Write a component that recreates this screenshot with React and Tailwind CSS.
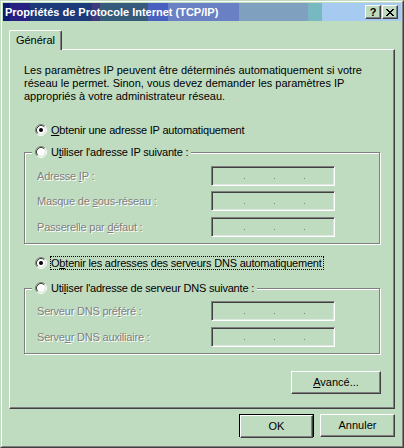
import React from "react";

function Radio({ checked }) {
  return (
    <svg width="12" height="12" viewBox="0 0 12 12" className="shrink-0">
      <circle cx="6" cy="6" r="4" fill="#ffffff" />
      <path d="M2.11 9.89A5.5 5.5 0 0 1 9.89 2.11" stroke="#808080" fill="none" />
      <path d="M9.89 2.11A5.5 5.5 0 0 1 2.11 9.89" stroke="#ffffff" fill="none" />
      <path d="M2.82 9.18A4.5 4.5 0 0 1 9.18 2.82" stroke="#404040" fill="none" />
      <path d="M9.18 2.82A4.5 4.5 0 0 1 2.82 9.18" stroke="#dfe8df" fill="none" />
      {checked && <circle cx="6" cy="6" r="2" fill="#000000" />}
    </svg>
  );
}

function IpBox() {
  return (
    <div className="h-[20px] w-[124px] border border-t-[#808080] border-l-[#808080] border-b-white border-r-white shadow-[inset_1px_1px_0_#404040,inset_-1px_-1px_0_#dfe8df]">
      <div className="flex gap-[29px] pl-[32px] pt-[11px]">
        <span className="h-px w-px bg-[#808080]" />
        <span className="h-px w-px bg-[#808080]" />
        <span className="h-px w-px bg-[#808080]" />
      </div>
    </div>
  );
}

function Field({ children, className = "" }) {
  return (
    <div className={`flex items-center pl-[12px] ${className}`}>
      <span className="w-[174px] tracking-[-0.2px] text-[#808080] [text-shadow:1px_1px_0_#ffffff]">{children}</span>
      <IpBox />
    </div>
  );
}

function Button({ children, className = "" }) {
  return (
    <div
      className={`flex h-[23px] items-center justify-center border border-t-white border-l-white border-r-[#404040] border-b-[#404040] shadow-[inset_-1px_-1px_0_#808080] ${className}`}
    >
      {children}
    </div>
  );
}

function CaptionButton({ children }) {
  return (
    <div className="flex h-[14px] w-[16px] items-center justify-center border border-t-white border-l-white border-r-[#404040] border-b-[#404040] bg-[#c0dcc0] shadow-[inset_-1px_-1px_0_#808080]">
      {children}
    </div>
  );
}

function CloseGlyph() {
  const px = [
    [0, 0], [1, 0], [6, 0], [7, 0],
    [1, 1], [2, 1], [5, 1], [6, 1],
    [2, 2], [3, 2], [4, 2], [5, 2],
    [3, 3], [4, 3],
    [2, 4], [3, 4], [4, 4], [5, 4],
    [1, 5], [2, 5], [5, 5], [6, 5],
    [0, 6], [1, 6], [6, 6], [7, 6],
  ];
  return (
    <svg width="8" height="7" viewBox="0 0 8 7" shapeRendering="crispEdges">
      {px.map(([x, y]) => (
        <rect key={`${x}-${y}`} x={x} y={y} width="1" height="1" fill="#000" />
      ))}
    </svg>
  );
}

export default function App() {
  return (
    <div className="h-[448px] w-[404px] overflow-hidden border border-t-[#c0dcc0] border-l-[#c0dcc0] border-r-[#404040] border-b-[#404040] bg-[#c0dcc0] font-['Liberation_Sans',Arial,sans-serif] text-[11px] leading-[13px] text-black">
      <div className="flex h-full flex-col border border-t-white border-l-white border-r-[#808080] border-b-[#808080] p-px">
        {/* title bar */}
        <div className="flex h-[18px] shrink-0 items-center justify-between bg-[linear-gradient(to_right,#0c1a72_0px,#0c1a72_7px,#281f82_7px,#281f82_27px,#1c3a7a_27px,#1c3a7a_89px,#40387e_89px,#40387e_97px,#365a7a_97px,#365a7a_145px,#4860c0_145px,#4860c0_165px,#6a80c4_165px,#6a80c4_236px,#80a0c0_236px,#80a0c0_305px,#78b8c0_305px,#78b8c0_319px,#a6caf0_319px)] pl-[2px] pr-[3px]">
          <span className="text-[11px] font-bold text-white">Propriétés de Protocole Internet (TCP/IP)</span>
          <div className="flex gap-px">
            <CaptionButton>
              <span className="text-[11px] font-bold leading-none">?</span>
            </CaptionButton>
            <CaptionButton>
              <CloseGlyph />
            </CaptionButton>
          </div>
        </div>

        <div className="mt-[9px] flex flex-col px-[6px]">
          {/* tab */}
          <div className="relative z-10 -mb-px flex h-[20px] w-[53px] items-center justify-center rounded-t-[2px] border-l border-t border-r border-l-white border-t-white border-r-[#404040] bg-[#c0dcc0] pb-[1px] shadow-[inset_-1px_0_0_#808080]">
            Général
          </div>

          {/* panel */}
          <div className="flex h-[360px] flex-col border border-t-white border-l-white border-r-[#404040] border-b-[#404040] shadow-[inset_-1px_-1px_0_#808080]">
            <p className="ml-[14px] mt-[14px]">
              Les paramètres IP peuvent être déterminés automatiquement si votre
              <br />
              réseau le permet. Sinon, vous devez demander les paramètres IP
              <br />
              appropriés à votre administrateur réseau.
            </p>

            <div className="ml-[25px] mt-[19px] flex h-[16px] items-center gap-[4px]">
              <Radio checked />
              <span className="tracking-[-0.2px]">
                <u>O</u>btenir une adresse IP automatiquement
              </span>
            </div>

            <div className="relative ml-[14px] mt-[14px] h-[92px] w-[356px] border border-[#808080] shadow-[inset_1px_1px_0_#ffffff,1px_1px_0_#ffffff]">
              <div className="absolute -top-[9px] left-[7px] flex h-[16px] items-center gap-[4px] bg-[#c0dcc0] px-[3px]">
                <Radio />
                <span className="tracking-[-0.2px]">
                  U<u>t</u>iliser l'adresse IP suivante :
                </span>
              </div>
              <Field className="mt-[13px]">
                Adresse <u>I</u>P :
              </Field>
              <Field className="mt-[5px]">
                Masque de <u>s</u>ous-réseau :
              </Field>
              <Field className="mt-[6px]">
                Passerelle par <u>d</u>éfaut :
              </Field>
            </div>

            <div className="ml-[25px] mt-[11px] flex h-[16px] items-center gap-[3px]">
              <Radio checked />
              <span className="border border-dotted border-black pr-px leading-[12px] tracking-[-0.2px]">
                O<u>b</u>tenir les adresses des serveurs DNS automatiquement
              </span>
            </div>

            <div className="relative ml-[14px] mt-[17px] h-[66px] w-[356px] border border-[#808080] shadow-[inset_1px_1px_0_#ffffff,1px_1px_0_#ffffff]">
              <div className="absolute -top-[9px] left-[7px] flex h-[16px] items-center gap-[4px] bg-[#c0dcc0] px-[3px]">
                <Radio />
                <span className="tracking-[-0.2px]">
                  Uti<u>l</u>iser l'adresse de serveur DNS suivante :
                </span>
              </div>
              <Field className="mt-[12px]">
                Serveur DNS pré<u>f</u>éré :
              </Field>
              <Field className="mt-[6px]">
                Serve<u>u</u>r DNS auxiliaire :
              </Field>
            </div>

            <div className="ml-[14px] mt-[17px] flex w-[357px] justify-end">
              <Button className="w-[90px]">
                <span>
                  <u>A</u>vancé...
                </span>
              </Button>
            </div>
          </div>

          {/* dialog buttons */}
          <div className="mt-[5px] flex justify-end gap-[6px]">
            <div className="h-[23px] w-[75px] border border-black">
              <Button className="h-[21px] w-full">OK</Button>
            </div>
            <Button className="w-[75px]">Annuler</Button>
          </div>
        </div>
      </div>
    </div>
  );
}
